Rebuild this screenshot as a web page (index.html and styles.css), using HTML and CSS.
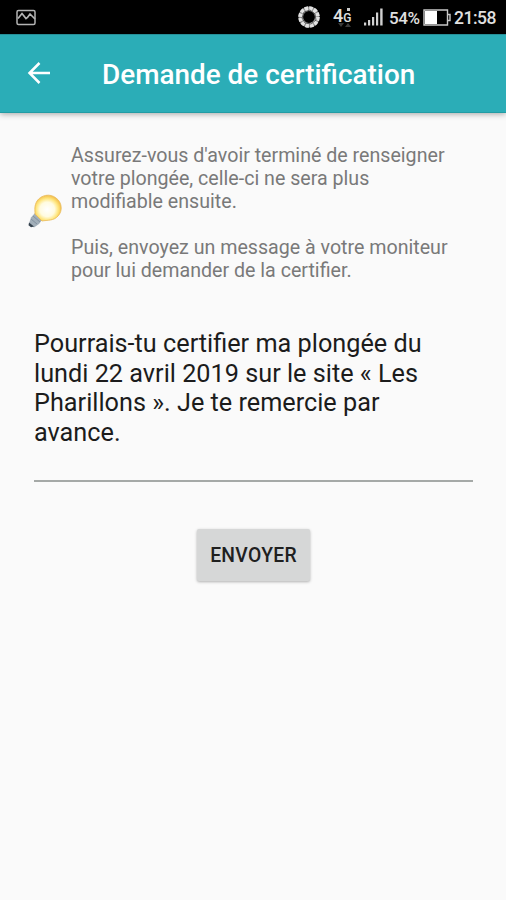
FILE: index.html
```
<!DOCTYPE html>
<html lang="fr">
<head>
<meta charset="utf-8">
<title>Demande de certification</title>
<link rel="stylesheet" href="styles.css">
</head>
<body>
<div class="status">
  <svg class="picture" width="20" height="17" viewBox="0 0 20 17" fill="none" stroke="#b4b4b4" stroke-width="1.5"><rect x="1" y="1.5" width="18" height="14" rx="1.5"/><path d="M2 9.5 6 4.5l4 5 1.5-1L14 5l5 5" stroke-width="1.7"/></svg>
  <svg class="ring" width="24" height="24" viewBox="0 0 24 24" fill="none"><circle cx="12" cy="12" r="8.2" stroke="#8e8e8e" stroke-width="4.6"/><circle cx="12" cy="12" r="8.6" stroke="#e2e2e2" stroke-width="4.4" stroke-dasharray="3.4 1.1"/><path d="m7 7 6-2 5 4 1 6-5 4-6-1-3-5z" stroke="#444" stroke-width=".8"/></svg>
  <div class="network"><span class="four">4</span><span class="gee">G</span>
    <svg class="marks" width="20" height="22" viewBox="0 0 20 22"><path d="M14 1h3v3h-3z" fill="#ccc"/><path d="m5 16 3 4 3-4zm7 4 3-4 3 4z" fill="#3b3b3b"/></svg>
  </div>
  <svg class="signal" width="22" height="20" viewBox="0 0 22 20" fill="#d0d0d0"><path d="M1 15.5h2.2v3H1zM5 13h2.2v5.5H5zM9 10h2.2v8.5H9zM13 5.5h2.2v13H13zM17.2 1.5h2.4v17h-2.4z"/></svg>
  <span class="percent">54%</span>
  <svg class="battery" width="28" height="17" viewBox="0 0 28 17"><path d="M1 1h23.5v15H1zM25 5.5h2v6h-2" fill="none" stroke="#c8c8c8" stroke-width="1.4"/><path d="M2 2h12v13H2z" fill="#fff"/></svg>
  <span class="time">21:58</span>
</div>
<header class="bar">
  <svg class="back" width="24" height="24" viewBox="0 0 24 24" fill="none" stroke="#fff" stroke-width="2.5"><path d="M23 12H3M12.5 2 2.5 12l10 10"/></svg>
  <h1 class="title">Demande de certification</h1>
</header>
<main class="content">
  <section class="info">
    <svg class="bulb" width="34" height="34" viewBox="0 0 34 34">
      <defs><radialGradient id="glow" cx=".47" cy=".55" r=".56"><stop offset="0" stop-color="#fff"/><stop offset=".5" stop-color="#fffbe0"/><stop offset=".75" stop-color="#ffe67e"/><stop offset="1" stop-color="#f2b944"/></radialGradient></defs>
      <path d="m7 19 7 7-3 4-5 3.5-5-4 2-6z" fill="#a2afb9"/>
      <path d="m3 25 6 5M5 22l7 6" stroke="#8492a0" stroke-width="1"/><path d="m1 28.5 5 4-3 .8-2.5-2z" fill="#35424e"/>
      <path d="M7 20C7 16 6 12 9 7c4-6 13-8 19-3 6 4 7 13 2 18-4 5-11 4-16 5z" fill="url(#glow)" stroke="#e8ba58" stroke-width=".8"/>
    </svg>
    <div class="advice">
      <p>Assurez-vous d'avoir terminé de renseigner<br>votre plongée, celle-ci ne sera plus<br>modifiable ensuite.</p>
      <p>Puis, envoyez un message à votre moniteur<br>pour lui demander de la certifier.</p>
    </div>
  </section>
  <div class="message">Pourrais-tu certifier ma plongée du<br>lundi 22 avril 2019 sur le site « Les<br>Pharillons ». Je te remercie par<br>avance.</div>
  <button class="send" type="button">ENVOYER</button>
</main>
</body>
</html>
```

FILE: styles.css
```
* { box-sizing: border-box; }
body {
  margin: 0;
  height: 900px;
  overflow: hidden;
  background: #fafafa;
  font-family: Roboto, sans-serif;
}
svg { display: block; flex: none; }
.status {
  display: flex;
  align-items: center;
  height: 34px;
  padding-left: 16px;
  background: #000;
  color: #e0e0e0;
  font-size: 17.5px;
  font-weight: 500;
  line-height: 34px;
  white-space: nowrap;
}
.ring { margin-left: 261px; }
.network {
  position: relative;
  display: flex;
  align-items: center;
  width: 20px;
  height: 34px;
  margin-left: 12px;
}
.four { font-size: 18px; margin-top: -2px; }
.gee { font-size: 12px; padding-top: 2px; }
.marks { position: absolute; left: 0; top: 7px; }
.signal { margin-left: 10px; }
.percent { width: 31px; margin-left: 4px; padding-top: 2px; font-size: 17px; letter-spacing: -0.4px; }
.battery { margin-left: 3px; }
.time { margin-left: 3px; padding-top: 2px; letter-spacing: -0.5px; }
.bar {
  display: flex;
  align-items: center;
  height: 79px;
  padding: 0 0 2px 27px;
  background: #2badb7;
  border-top: 1px solid #268f98;
  border-bottom: 1px solid #229ca4;
  box-shadow: 0 1px 6px rgba(0, 0, 0, .35);
}
.title {
  margin: 4px 0 0 51px;
  color: #fff;
  font-size: 27.9px;
  font-weight: 500;
  line-height: 32px;
  white-space: nowrap;
}
.content { padding: 31px 33px 0 28px; }
.info { display: flex; align-items: center; }
.bulb { width: 34px; margin-bottom: 4px; }
.advice {
  margin-left: 9px;
  color: #797979;
  font-size: 19.64px;
  line-height: 23px;
  white-space: nowrap;
}
.advice p { margin: 0 0 23px; }
.advice p:last-child { margin: 0; }
.message {
  height: 153px;
  margin: 47px 0 0 6px;
  border-bottom: 2px solid #a5a9a7;
  color: #1c1c1c;
  font-size: 25.25px;
  line-height: 29.6px;
  white-space: nowrap;
}
.send {
  display: block;
  width: 113px;
  height: 52px;
  margin: 47px 0 0 169px;
  padding: 0;
  border: 0;
  border-radius: 2px;
  background: #d6d7d7;
  box-shadow: 0 1px 3px rgba(0, 0, 0, .3);
  color: #202020;
  font: 500 19.3px Roboto, sans-serif;
  letter-spacing: .3px;
}
```
